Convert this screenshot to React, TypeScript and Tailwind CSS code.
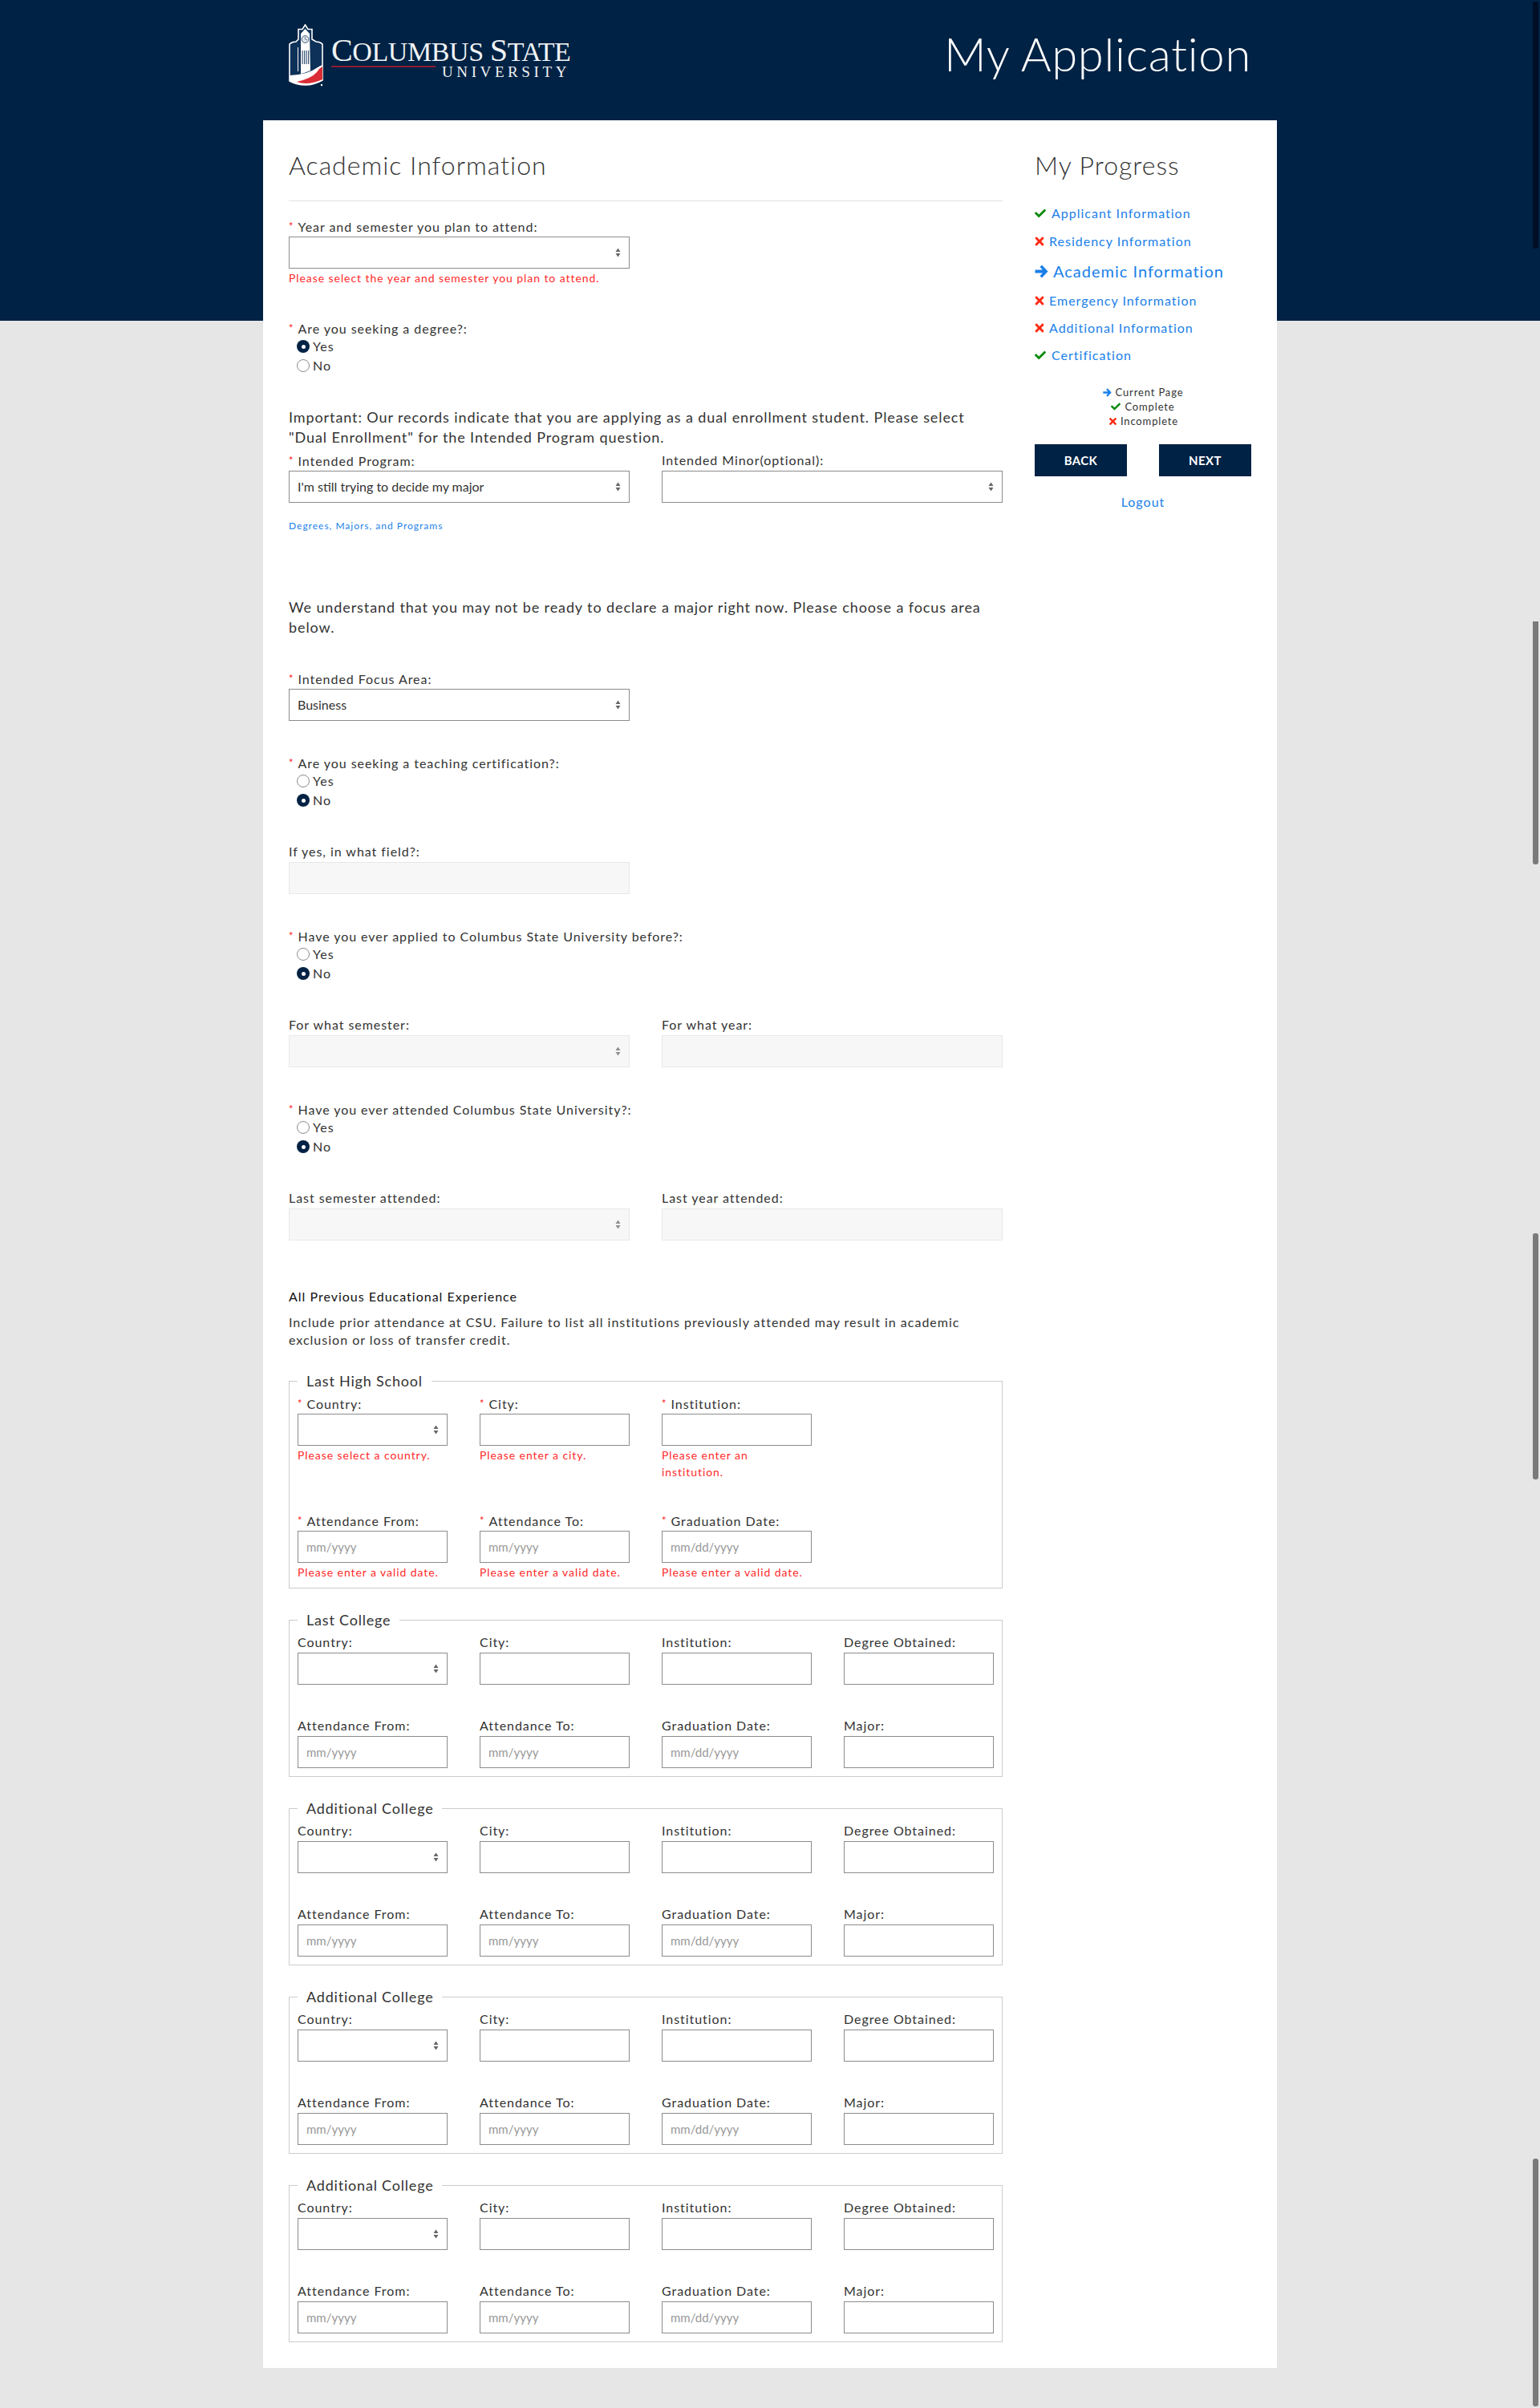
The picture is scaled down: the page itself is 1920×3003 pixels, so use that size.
import { FaCheck, FaTimes } from "react-icons/fa";

const Shield = () => (
  <svg width="43" height="78" viewBox="0 0 43 78" className="shrink-0">
    <path d="M20.5 1 L24 6.5 L29 6.5 L29 19 L34 22 Q39 22 42 25 L42 70 Q31 76 21 76 Q10 76 1 71 L1 25 Q4 22 9 22 L12 19 L12 6.5 L17 6.5 Z" fill="#0d3158" stroke="#ffffff" strokeWidth="1.6" />
    <path d="M15 12 L20.5 6 L26 12 L27 58 Q20 61 15 62 Z" fill="#ffffff" />
    <circle cx="20.5" cy="19" r="4.4" fill="#dfe5ea" stroke="#3b5876" strokeWidth="1" />
    <path d="M20.5 19 L20.5 16 M20.5 19 L23 20" stroke="#3b5876" strokeWidth="0.7" />
    <path d="M16.5 33h1.2v17h-1.2z M19 33h1.2v17h-1.2z M21.5 33h1.2v17h-1.2z M24 33h1.2v17h-1.2z" fill="#3b5876" />
    <path d="M11 29h1v30h-1z" fill="#ffffff" />
    <path d="M1 64 Q24 63 36 54 Q39 52 42 51 L42 70 Q31 76 21 76 Q10 76 1 71 Z" fill="#ffffff" />
    <path d="M10 72 Q28 68 35 60 Q38 55 42 53 L42 69 Q31 74 21 74 Q15 74 10 72 Z" fill="#d92c35" />
    <circle cx="41" cy="76" r="1.2" fill="#ffffff" />
  </svg>
);

const Logo = () => (
  <div className="flex items-start gap-[10px]">
    <Shield />
    <div className="w-[298px] pt-[15px] font-['Liberation_Serif',serif] text-[#f1f3f5] leading-none">
      <div className="h-[35px] whitespace-nowrap text-[34px] leading-[35px] tracking-[-0.4px]">
        <span className="text-[40px]">C</span>OLUMBUS <span className="text-[40px]">S</span>TATE
      </div>
      <div className="flex items-center">
        <div className="h-[2px] w-[132px] -translate-y-[7px] bg-[#8c1d36]" />
        <div className="ml-[8px] whitespace-nowrap text-[19px] leading-[20px] tracking-[4.6px]">UNIVERSITY</div>
      </div>
    </div>
  </div>
);

const Req = () => <span className="mr-[5px] align-[2px] text-[13px] text-[#ff2020]">*</span>;

const Label = ({ text, req }: { text: string; req?: boolean }) => (
  <div className="mb-[3px] h-[20px] whitespace-nowrap text-[16px] leading-[20px] tracking-[0.95px] text-[#333]">
    {req && <Req />}
    {text}
  </div>
);

const Arrows = ({ muted }: { muted?: boolean }) => (
  <svg width="7" height="12" viewBox="0 0 7 12" className="pointer-events-none absolute right-[10px] top-[13px]">
    <path d="M3.5 0.5 L6.5 5 H0.5 Z M3.5 11.5 L0.5 7 H6.5 Z" fill={muted ? "#8f8f8f" : "#666666"} />
  </svg>
);

const Select = ({ value, disabled }: { value?: string; disabled?: boolean }) => (
  <div className={`relative h-[40px] border px-[10px] text-[16px] leading-[38px] text-[#333] ${disabled ? "border-[#e8e8e8] bg-[#f7f7f7]" : "border-[#8c8c8c] bg-white"}`}>
    {value}
    <Arrows muted={disabled} />
  </div>
);

const Input = ({ placeholder, disabled }: { placeholder?: string; disabled?: boolean }) => (
  <input
    disabled={disabled}
    placeholder={placeholder}
    className={`block h-[40px] w-full border px-[10px] text-[15px] outline-none placeholder:text-[#999] ${disabled ? "border-[#e8e8e8] bg-[#f7f7f7]" : "border-[#8c8c8c] bg-white"}`}
  />
);

const Err = ({ children }: { children: React.ReactNode }) => (
  <div className="mt-[1px] text-[14px] leading-[21px] tracking-[0.93px] text-[#ff2a2a]">{children}</div>
);

const Radio = ({ text, on }: { text: string; on?: boolean }) => (
  <div className="flex h-[24px] items-center pl-[10px] text-[16px] tracking-[1px] text-[#333]">
    {on ? (
      <span className="mr-[4px] flex h-[16px] w-[16px] items-center justify-center rounded-full bg-[#002244]">
        <span className="h-[5px] w-[5px] rounded-full bg-white" />
      </span>
    ) : (
      <span className="mr-[4px] h-[16px] w-[16px] rounded-full border border-[#8c8c8c] bg-white" />
    )}
    {text}
  </div>
);

const RadioGroup = ({ text, yes, className }: { text: string; yes: boolean; className: string }) => (
  <div className={className}>
    <div className="h-[21px] text-[16px] leading-[20px] tracking-[0.95px] text-[#333]">
      <Req />
      {text}
    </div>
    <Radio text="Yes" on={yes} />
    <Radio text="No" on={!yes} />
  </div>
);

const Para = ({ children, className }: { children: React.ReactNode; className: string }) => (
  <p className={`text-[18px] leading-[25px] tracking-[0.9px] text-[#333] ${className}`}>{children}</p>
);

const Group = ({ title, className }: { title: string; className: string }) => (
  <fieldset className={`border border-[#cccccc] px-[10px] pb-[10px] ${className}`}>
    <legend className="px-[11px] text-[18px] leading-[23px] tracking-[0.8px] text-[#333]">{title}</legend>
    <div className="mt-[6px] grid grid-cols-4 gap-x-[40px] gap-y-[41px]">
      <div><Label text="Country:" /><Select /></div>
      <div><Label text="City:" /><Input /></div>
      <div><Label text="Institution:" /><Input /></div>
      <div><Label text="Degree Obtained:" /><Input /></div>
      <div><Label text="Attendance From:" /><Input placeholder="mm/yyyy" /></div>
      <div><Label text="Attendance To:" /><Input placeholder="mm/yyyy" /></div>
      <div><Label text="Graduation Date:" /><Input placeholder="mm/dd/yyyy" /></div>
      <div><Label text="Major:" /><Input /></div>
    </div>
  </fieldset>
);

const progress = [
  { text: "Applicant Information", state: "ok", h: "h-[34px]" },
  { text: "Residency Information", state: "bad", h: "h-[36px]" },
  { text: "Academic Information", state: "cur", h: "h-[38px]" },
  { text: "Emergency Information", state: "bad", h: "h-[35px]" },
  { text: "Additional Information", state: "bad", h: "h-[34px]" },
  { text: "Certification", state: "ok", h: "h-[34px]" },
];

const BoldArrow = ({ size }: { size: number }) => (
  <svg width={size} height={size} viewBox="0 0 17 17" className="shrink-0">
    <path d="M9 0.5 L16.5 8.5 L9 16.5 L6.5 14 L9.8 10.5 H0.5 V6.5 H9.8 L6.5 3 Z" fill="#1a7fe8" />
  </svg>
);

const StateIcon = ({ state, size }: { state: string; size: number }) => {
  if (state === "ok") return <FaCheck size={size} className="shrink-0 text-[#0a8a0a]" />;
  if (state === "bad") return <FaTimes size={size} className="shrink-0 text-[#ff2a12]" />;
  return <BoldArrow size={size} />;
};

const itemGap = (state: string) => {
  if (state === "cur") return "gap-[6px] text-[20px]";
  if (state === "bad") return "-ml-[2px] gap-[4px] text-[16px]";
  return "gap-[7px] text-[16px]";
};

const Bars = () => (
  <>
    <div className="absolute right-[2px] top-[2px] h-[308px] w-[7px] rounded-[3px] bg-[#000f26]" />
    <div className="absolute right-[2px] top-[775px] h-[303px] w-[7px] rounded-b-[3px] bg-[#7a7a7a]" />
    <div className="absolute right-[2px] top-[1538px] h-[307px] w-[7px] rounded-[3px] bg-[#7a7a7a]" />
    <div className="absolute right-[2px] top-[2692px] h-[309px] w-[7px] rounded-[3px] bg-[#7a7a7a]" />
  </>
);

export default function App() {
  return (
    <div className="relative min-h-[3003px] bg-[#e6e6e6] font-['Lato',sans-serif]">
      <div className="h-[400px] bg-[#002244]">
        <div className="mx-auto flex w-[1200px] justify-between pt-[30px]">
          <Logo />
          <h1 className="-mt-[2px] text-[58px] font-light leading-[78px] tracking-[0.7px] text-white">My Application</h1>
        </div>
      </div>

      <div className="relative mx-auto -mt-[250px] flex h-[2803px] w-[1264px] gap-[40px] bg-white px-[32px] pt-[36px]">
        <div className="w-[890px]">
          <h2 className="text-[32px] font-light leading-[40px] tracking-[1px] text-[#333]">Academic Information</h2>
          <div className="mb-[21px] mt-[24px] h-[1px] bg-[#e2e2e2]" />

          <div className="w-[425px]">
            <Label text="Year and semester you plan to attend:" req />
            <Select />
            <Err>Please select the year and semester you plan to attend.</Err>
          </div>

          <RadioGroup className="mt-[42px]" text="Are you seeking a degree?:" yes />

          <Para className="mt-[40px]">
            Important: Our records indicate that you are applying as a dual enrollment student. Please select "Dual Enrollment" for the Intended Program question.
          </Para>
          <div className="mt-[6px] grid grid-cols-2 gap-x-[40px]">
            <div><Label text="Intended Program:" req /><Select value="I'm still trying to decide my major" /></div>
            <div><Label text="Intended Minor(optional):" /><Select /></div>
          </div>
          <a className="mt-[19px] block text-[12px] leading-[20px] tracking-[1px] text-[#1a7fe8]">Degrees, Majors, and Programs</a>

          <Para className="mt-[79px]">
            We understand that you may not be ready to declare a major right now. Please choose a focus area below.
          </Para>

          <div className="mt-[41px] w-[425px]">
            <Label text="Intended Focus Area:" req />
            <Select value="Business" />
          </div>

          <RadioGroup className="mt-[42px]" text="Are you seeking a teaching certification?:" yes={false} />

          <div className="mt-[42px] w-[425px]">
            <Label text="If yes, in what field?:" />
            <Input disabled />
          </div>

          <RadioGroup className="mt-[42px]" text="Have you ever applied to Columbus State University before?:" yes={false} />

          <div className="mt-[42px] grid grid-cols-2 gap-x-[40px]">
            <div><Label text="For what semester:" /><Select disabled /></div>
            <div><Label text="For what year:" /><Input disabled /></div>
          </div>

          <RadioGroup className="mt-[42px]" text="Have you ever attended Columbus State University?:" yes={false} />

          <div className="mt-[42px] grid grid-cols-2 gap-x-[40px]">
            <div><Label text="Last semester attended:" /><Select disabled /></div>
            <div><Label text="Last year attended:" /><Input disabled /></div>
          </div>

          <div className="mt-[60px] text-[16px] leading-[20px] tracking-[1px] text-[#111]">All Previous Educational Experience</div>
          <p className="mt-[11px] text-[16px] leading-[22px] tracking-[1px] text-[#333]">
            Include prior attendance at CSU. Failure to list all institutions previously attended may result in academic exclusion or loss of transfer credit.
          </p>

          <fieldset className="mt-[29px] border border-[#cccccc] px-[10px] pb-[9px]">
            <legend className="px-[11px] text-[18px] leading-[23px] tracking-[0.8px] text-[#333]">Last High School</legend>
            <div className="mt-[6px] grid grid-cols-4 gap-x-[40px]">
              <div><Label text="Country:" req /><Select /><Err>Please select a country.</Err></div>
              <div><Label text="City:" req /><Input /><Err>Please enter a city.</Err></div>
              <div><Label text="Institution:" req /><Input /><Err>Please enter an institution.</Err></div>
              <div />
            </div>
            <div className="mt-[40px] grid grid-cols-4 gap-x-[40px]">
              <div><Label text="Attendance From:" req /><Input placeholder="mm/yyyy" /><Err>Please enter a valid date.</Err></div>
              <div><Label text="Attendance To:" req /><Input placeholder="mm/yyyy" /><Err>Please enter a valid date.</Err></div>
              <div><Label text="Graduation Date:" req /><Input placeholder="mm/dd/yyyy" /><Err>Please enter a valid date.</Err></div>
              <div />
            </div>
          </fieldset>

          <Group title="Last College" className="mt-[28px]" />
          <Group title="Additional College" className="mt-[28px]" />
          <Group title="Additional College" className="mt-[28px]" />
          <Group title="Additional College" className="mt-[28px]" />
        </div>

        <div className="w-[270px]">
          <h2 className="text-[32px] font-light leading-[40px] tracking-[1px] text-[#333]">My Progress</h2>
          <ul className="mt-[23px]">
            {progress.map((p) => (
              <li key={p.text} className={`flex items-center ${p.h} ${itemGap(p.state)} tracking-[1px] text-[#1a7fe8]`}>
                <StateIcon state={p.state} size={p.state === "cur" ? 17 : p.state === "bad" ? 16 : 14} />
                {p.text}
              </li>
            ))}
          </ul>
          <div className="mt-[20px] flex flex-col items-center text-[13px] leading-[18px] tracking-[0.85px] text-[#333]">
            <div className="flex items-center gap-[5px]"><StateIcon state="cur" size={11} />Current Page</div>
            <div className="flex items-center gap-[5px]"><StateIcon state="ok" size={12} />Complete</div>
            <div className="flex items-center gap-[3px]"><StateIcon state="bad" size={13} />Incomplete</div>
          </div>
          <div className="mt-[20px] flex justify-between">
            <button className="h-[40px] w-[115px] bg-[#002244] text-[15px] font-bold tracking-[0.4px] text-white">BACK</button>
            <button className="h-[40px] w-[115px] bg-[#002244] text-[15px] font-bold tracking-[0.4px] text-white">NEXT</button>
          </div>
          <a className="mt-[22px] block text-center text-[16px] leading-[20px] tracking-[1px] text-[#1a7fe8]">Logout</a>
        </div>
      </div>
      <Bars />
    </div>
  );
}
